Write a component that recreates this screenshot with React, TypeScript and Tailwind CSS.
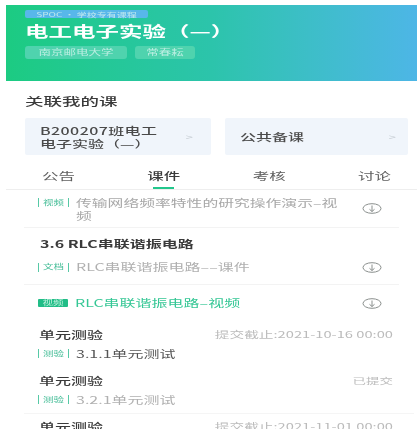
const font = { fontFamily: '"Noto Sans CJK SC", "Liberation Sans", sans-serif' };

function T({ c, children }: { c: string; children: React.ReactNode }) {
  return <span className={`inline-block origin-center scale-y-[0.62] whitespace-nowrap ${c}`}>{children}</span>;
}

function Dl() {
  return (
    <svg width="20" height="11" viewBox="0 0 20 11" fill="none" stroke="#8a8f8d" strokeWidth="1" className="shrink-0">
      <ellipse cx="10" cy="5.5" rx="9" ry="4.8" />
      <path d="M10 2.5V8.5M7.5 6.3 10 8.5l2.5-2.2" />
    </svg>
  );
}

function Tag({ label, solid }: { label: string; solid?: boolean }) {
  return solid ? (
    <span className="mr-[7px] flex h-[8px] w-[30px] shrink-0 items-center justify-center rounded-[1px] bg-[#21bd87] text-[10.5px] text-[#bdf0dc]">
      <T c="">{label}</T>
    </span>
  ) : (
    <span className="mr-[7px] flex h-[9px] w-[31px] shrink-0 items-center justify-center border-x border-[#57c9a6] text-[10.5px] text-[#45bd97]">
      <T c="">{label}</T>
    </span>
  );
}

function Quiz({ name, right, rc, tag, title, dark }: { name: string; right: string; rc: string; tag: string; title: string; dark?: boolean }) {
  return (
    <div className="pl-[33px] pr-[24px]">
      <div className="flex h-[19px] items-center justify-between">
        <T c="text-[16px] font-medium text-[#3a3a3a]">{name}</T>
        <T c={`${rc} text-[#bbbbbb]`}>{right}</T>
      </div>
      <div className="-ml-[1px] flex h-[19px] items-center">
        <Tag label={tag} />
        <T c={`text-[16px] ${dark ? "text-[#555]" : "text-[#b0b0b0]"}`}>{title}</T>
      </div>
    </div>
  );
}

export default function App() {
  return (
    <div className="h-[434px] w-[417px] overflow-hidden bg-white pt-[5px] pl-[6px] blur-[0.7px]" style={font}>
      <div className="h-[424px] overflow-hidden">
        <header className="flex h-[76px] flex-col items-start bg-gradient-to-r from-[#1ccb82] via-[#2cc4ab] to-[#4db6e6] pl-[19px] pt-[5px]">
          <div className="flex h-[8px] w-[123px] items-center justify-center rounded-[2px] bg-[#58b7ea] text-[10px] text-[#bfe8ee]">
            <T c="">SPOC · 学校专有课程</T>
          </div>
          <div className="mt-[4px] flex h-[20px] items-center text-[23.5px] font-bold leading-none text-white">
            <T c="">电工电子实验（—）</T>
          </div>
          <div className="mt-[4px] flex gap-[8px]">
            <div className="flex h-[13px] w-[102px] items-center justify-center rounded-[3px] bg-[#4fd3ae] text-[12.5px] text-[#bdeee2]">
              <T c="">南京邮电大学</T>
            </div>
            <div className="flex h-[13px] w-[60px] items-center justify-center rounded-[3px] bg-[#4fd3ae] text-[12.5px] text-[#bdeee2]">
              <T c="">常春耘</T>
            </div>
          </div>
        </header>

        <section className="pl-[19px] pr-[3px]">
          <div className="flex h-[37px] items-center pt-[5px] text-[18.5px] font-medium text-[#3a3a3a]">
            <T c="">关联我的课</T>
          </div>
          <div className="flex gap-[14px]">
            <div className="flex h-[37px] w-[186px] items-center justify-between rounded-[2px] bg-[#f0f5fb] pl-[15px] pr-[18px]">
              <div className="flex flex-col items-start text-[16px] font-medium leading-[13px] text-[#4a4a4a]">
                <T c="tracking-[0.4px]">B200207班电工</T>
                <T c="">电子实验（—）</T>
              </div>
              <T c="text-[13px] text-[#c5ccd2]">&gt;</T>
            </div>
            <div className="flex h-[37px] w-[183px] items-center justify-between rounded-[2px] bg-[#f0f5fb] pl-[15px] pr-[12px]">
              <T c="text-[16px] font-medium text-[#4a4a4a]">公共备课</T>
              <T c="text-[13px] text-[#c5ccd2]">&gt;</T>
            </div>
          </div>
        </section>

        <nav className="relative mt-[6px] flex h-[29px] items-center justify-between border-b border-[#eeeeee] pt-[3px] pl-[36px] pr-[26px] text-[16.5px] text-[#606060]">
          <T c="">公告</T>
          <T c="font-medium text-[#3a3a3a]">课件</T>
          <T c="">考核</T>
          <T c="">讨论</T>
          <span className="absolute bottom-0 left-[147px] h-[2px] w-[21px] bg-[#21c78c]" />
        </nav>

        <div className="mx-[18px] flex h-[38px] items-center justify-between border-b border-[#f3f3f3] pl-[14px] pr-[17px]">
          <div className="flex items-start">
            <span className="mt-[3px]"><Tag label="视频" /></span>
            <div className="flex w-[272px] flex-col items-start pt-[1px] text-[15.8px] leading-[13px] text-[#a8a8a8]">
              <T c="">传输网络频率特性的研究操作演示–视</T>
              <T c="">频</T>
            </div>
          </div>
          <Dl />
        </div>

        <div className="flex h-[30px] items-center pl-[34px] pt-[2px] text-[16px] font-bold text-[#3a3a3a]">
          <T c="">3.6 RLC串联谐振电路</T>
        </div>

        <div className="mx-[18px] flex h-[18px] items-center justify-between pl-[14px] pr-[17px]">
          <div className="flex items-center">
            <Tag label="文档" />
            <T c="text-[16px] text-[#b0b0b0]">RLC串联谐振电路––课件</T>
          </div>
          <Dl />
        </div>

        <div className="mx-[18px] mt-[8px] flex h-[37px] items-center justify-between border-t border-[#f3f3f3] pl-[14px] pr-[17px]">
          <div className="flex items-center">
            <Tag label="视频" solid />
            <T c="text-[16px] text-[#35c795]">RLC串联谐振电路–视频</T>
          </div>
          <Dl />
        </div>

        <div className="mt-[4px]">
          <Quiz name="单元测验" right="提交截止:2021-10-16 00:00" rc="text-[14.7px]" tag="测验" title="3.1.1单元测试" dark />
        </div>
        <div className="ml-[18px] mr-[3px] mt-[8px] border-b border-[#f5f5f5] pb-[4px]">
          <div className="-ml-[18px] -mr-[3px]">
            <Quiz name="单元测验" right="已提交" rc="text-[13.5px]" tag="测验" title="3.2.1单元测试" />
          </div>
        </div>
        <div className="pt-[3px]">
          <div className="flex h-[19px] items-center justify-between pl-[33px] pr-[24px]">
            <T c="text-[16px] font-medium text-[#3a3a3a]">单元测验</T>
            <T c="text-[14.7px] text-[#bbbbbb]">提交截止:2021-11-01 00:00</T>
          </div>
        </div>
      </div>
    </div>
  );
}
